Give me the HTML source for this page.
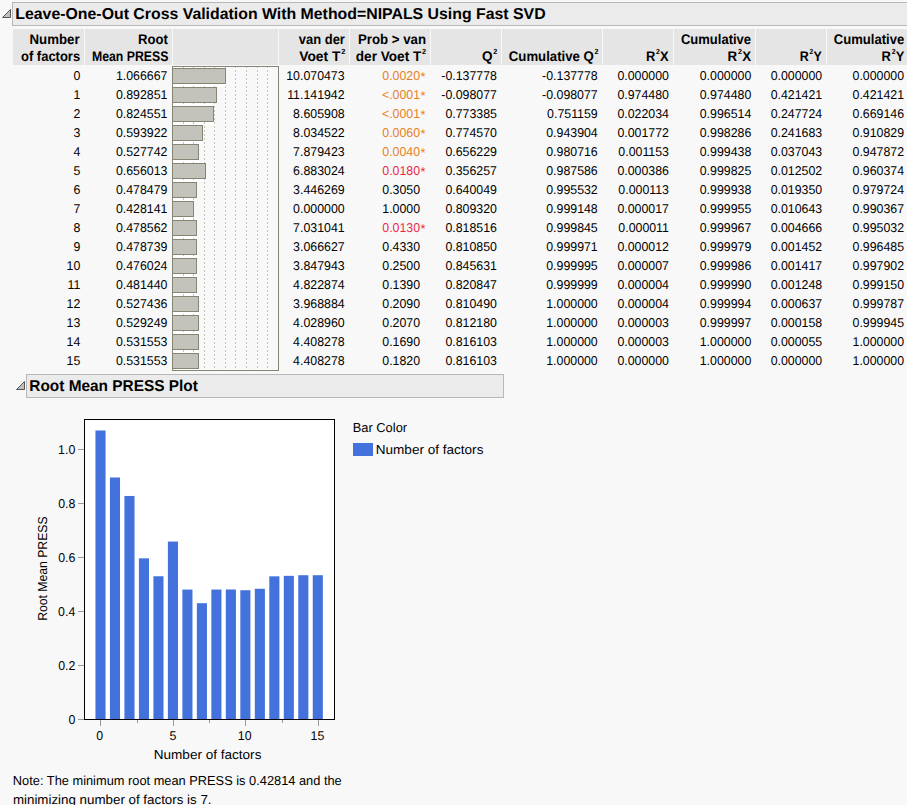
<!DOCTYPE html><html><head><meta charset="utf-8"><style>html,body{margin:0;padding:0}body{width:907px;height:805px;overflow:hidden;background:#f8f8f8;position:relative}svg{position:absolute;left:0;top:0}text{font-family:"Liberation Sans",sans-serif}</style></head><body>
<svg width="907" height="805" style="text-rendering:geometricPrecision">
<rect x="12.5" y="2.5" width="905" height="23" fill="#ebebeb" stroke="#b8b8b8"/>
<path d="M2.5 17.5 L10.5 17.5 L10.5 9.5 Z" fill="#c0c0c0" stroke="#555" stroke-width="1" stroke-linejoin="miter"/>
<rect x="26.5" y="374.5" width="477" height="23" fill="#ebebeb" stroke="#b8b8b8"/>
<path d="M16.5 389.5 L24.5 389.5 L24.5 381.5 Z" fill="#c0c0c0" stroke="#555" stroke-width="1" stroke-linejoin="miter"/>
<rect x="13" y="29" width="71" height="36" fill="#e5e5e5"/>
<rect x="85" y="29" width="87" height="36" fill="#e5e5e5"/>
<rect x="173" y="29" width="105" height="36" fill="#e5e5e5"/>
<rect x="279" y="29" width="70" height="36" fill="#e5e5e5"/>
<rect x="350" y="29" width="80" height="36" fill="#e5e5e5"/>
<rect x="431" y="29" width="70" height="36" fill="#e5e5e5"/>
<rect x="502" y="29" width="100" height="36" fill="#e5e5e5"/>
<rect x="603" y="29" width="70" height="36" fill="#e5e5e5"/>
<rect x="674" y="29" width="81" height="36" fill="#e5e5e5"/>
<rect x="756" y="29" width="70" height="36" fill="#e5e5e5"/>
<rect x="827" y="29" width="81" height="36" fill="#e5e5e5"/>
<g shape-rendering="crispEdges">
<rect x="172.5" y="66.5" width="106" height="304" fill="none" stroke="#858576"/>
<rect x="172" y="67" width="54" height="20" fill="#fff"/>
<rect x="172" y="86" width="45" height="20" fill="#fff"/>
<rect x="172" y="105" width="42" height="20" fill="#fff"/>
<rect x="172" y="124" width="31" height="20" fill="#fff"/>
<rect x="172" y="143" width="27" height="20" fill="#fff"/>
<rect x="172" y="162" width="34" height="20" fill="#fff"/>
<rect x="172" y="181" width="25" height="20" fill="#fff"/>
<rect x="172" y="200" width="22" height="20" fill="#fff"/>
<rect x="172" y="219" width="25" height="20" fill="#fff"/>
<rect x="172" y="238" width="25" height="20" fill="#fff"/>
<rect x="172" y="257" width="25" height="20" fill="#fff"/>
<rect x="172" y="276" width="25" height="20" fill="#fff"/>
<rect x="172" y="295" width="27" height="20" fill="#fff"/>
<rect x="172" y="314" width="27" height="20" fill="#fff"/>
<rect x="172" y="333" width="27" height="20" fill="#fff"/>
<rect x="172" y="352" width="27" height="18" fill="#fff"/>
<line x1="183.5" y1="67" x2="183.5" y2="370" stroke="#fff"/>
<line x1="183.5" y1="66" x2="183.5" y2="370" stroke="#c3c3bb" stroke-dasharray="2,2"/>
<line x1="193.5" y1="67" x2="193.5" y2="370" stroke="#fff"/>
<line x1="193.5" y1="66" x2="193.5" y2="370" stroke="#c3c3bb" stroke-dasharray="2,2"/>
<line x1="204.5" y1="67" x2="204.5" y2="370" stroke="#fff"/>
<line x1="204.5" y1="66" x2="204.5" y2="370" stroke="#c3c3bb" stroke-dasharray="2,2"/>
<line x1="214.5" y1="67" x2="214.5" y2="370" stroke="#fff"/>
<line x1="214.5" y1="66" x2="214.5" y2="370" stroke="#c3c3bb" stroke-dasharray="2,2"/>
<line x1="225.5" y1="67" x2="225.5" y2="370" stroke="#fff"/>
<line x1="225.5" y1="66" x2="225.5" y2="370" stroke="#c3c3bb" stroke-dasharray="2,2"/>
<line x1="235.5" y1="67" x2="235.5" y2="370" stroke="#fff"/>
<line x1="235.5" y1="66" x2="235.5" y2="370" stroke="#c3c3bb" stroke-dasharray="2,2"/>
<line x1="246.5" y1="67" x2="246.5" y2="370" stroke="#fff"/>
<line x1="246.5" y1="66" x2="246.5" y2="370" stroke="#c3c3bb" stroke-dasharray="2,2"/>
<line x1="257.5" y1="67" x2="257.5" y2="370" stroke="#fff"/>
<line x1="257.5" y1="66" x2="257.5" y2="370" stroke="#c3c3bb" stroke-dasharray="2,2"/>
<line x1="267.5" y1="67" x2="267.5" y2="370" stroke="#fff"/>
<line x1="267.5" y1="66" x2="267.5" y2="370" stroke="#c3c3bb" stroke-dasharray="2,2"/>
<rect x="172.5" y="68.5" width="53" height="15" fill="#c3c3bb" stroke="#858576"/>
<rect x="172.5" y="87.5" width="44" height="15" fill="#c3c3bb" stroke="#858576"/>
<rect x="172.5" y="106.5" width="41" height="15" fill="#c3c3bb" stroke="#858576"/>
<rect x="172.5" y="125.5" width="30" height="15" fill="#c3c3bb" stroke="#858576"/>
<rect x="172.5" y="144.5" width="26" height="15" fill="#c3c3bb" stroke="#858576"/>
<rect x="172.5" y="163.5" width="33" height="15" fill="#c3c3bb" stroke="#858576"/>
<rect x="172.5" y="182.5" width="24" height="15" fill="#c3c3bb" stroke="#858576"/>
<rect x="172.5" y="201.5" width="21" height="15" fill="#c3c3bb" stroke="#858576"/>
<rect x="172.5" y="220.5" width="24" height="15" fill="#c3c3bb" stroke="#858576"/>
<rect x="172.5" y="239.5" width="24" height="15" fill="#c3c3bb" stroke="#858576"/>
<rect x="172.5" y="258.5" width="24" height="15" fill="#c3c3bb" stroke="#858576"/>
<rect x="172.5" y="277.5" width="24" height="15" fill="#c3c3bb" stroke="#858576"/>
<rect x="172.5" y="296.5" width="26" height="15" fill="#c3c3bb" stroke="#858576"/>
<rect x="172.5" y="315.5" width="26" height="15" fill="#c3c3bb" stroke="#858576"/>
<rect x="172.5" y="334.5" width="26" height="15" fill="#c3c3bb" stroke="#858576"/>
<rect x="172.5" y="353.5" width="26" height="15" fill="#c3c3bb" stroke="#858576"/>
<rect x="172.5" y="66.5" width="106" height="304" fill="none" stroke="#858576"/>
</g>
<rect x="84" y="419" width="251" height="301" fill="#fff"/>
<rect x="95.45" y="430.47" width="10.10" height="289.03" fill="#4472dc"/>
<rect x="109.94" y="477.48" width="10.10" height="242.02" fill="#4472dc"/>
<rect x="124.42" y="495.96" width="10.10" height="223.54" fill="#4472dc"/>
<rect x="138.91" y="558.34" width="10.10" height="161.16" fill="#4472dc"/>
<rect x="153.40" y="576.25" width="10.10" height="143.25" fill="#4472dc"/>
<rect x="167.88" y="541.55" width="10.10" height="177.95" fill="#4472dc"/>
<rect x="182.37" y="589.57" width="10.10" height="129.93" fill="#4472dc"/>
<rect x="196.86" y="603.19" width="10.10" height="116.31" fill="#4472dc"/>
<rect x="211.35" y="589.55" width="10.10" height="129.95" fill="#4472dc"/>
<rect x="225.83" y="589.50" width="10.10" height="130.00" fill="#4472dc"/>
<rect x="240.32" y="590.24" width="10.10" height="129.26" fill="#4472dc"/>
<rect x="254.81" y="588.77" width="10.10" height="130.73" fill="#4472dc"/>
<rect x="269.29" y="576.33" width="10.10" height="143.17" fill="#4472dc"/>
<rect x="283.78" y="575.84" width="10.10" height="143.66" fill="#4472dc"/>
<rect x="298.27" y="575.21" width="10.10" height="144.29" fill="#4472dc"/>
<rect x="312.75" y="575.21" width="10.10" height="144.29" fill="#4472dc"/>
<g shape-rendering="crispEdges">
<rect x="84.5" y="419.5" width="250" height="300" fill="none" stroke="#000"/>
<line x1="78" y1="719.5" x2="84" y2="719.5" stroke="#999"/>
<line x1="78" y1="665.5" x2="84" y2="665.5" stroke="#999"/>
<line x1="78" y1="611.5" x2="84" y2="611.5" stroke="#999"/>
<line x1="78" y1="557.5" x2="84" y2="557.5" stroke="#999"/>
<line x1="78" y1="503.5" x2="84" y2="503.5" stroke="#999"/>
<line x1="78" y1="449.5" x2="84" y2="449.5" stroke="#999"/>
<line x1="100.5" y1="720" x2="100.5" y2="726" stroke="#999"/>
<line x1="173.5" y1="720" x2="173.5" y2="726" stroke="#999"/>
<line x1="245.5" y1="720" x2="245.5" y2="726" stroke="#999"/>
<line x1="318.5" y1="720" x2="318.5" y2="726" stroke="#999"/>
<line x1="137.5" y1="720" x2="137.5" y2="723" stroke="#999"/>
<line x1="209.5" y1="720" x2="209.5" y2="723" stroke="#999"/>
<line x1="282.5" y1="720" x2="282.5" y2="723" stroke="#999"/>
<rect x="353" y="443" width="20" height="13" fill="#4472dc"/>
</g>
<text transform="translate(15.28 19.00) scale(1.0037 1)" font-size="15.8" font-weight="bold" fill="#000">Leave-One-Out Cross Validation With Method=NIPALS Using Fast SVD</text>
<text transform="translate(29.31 391.00) scale(0.9747 1)" font-size="15.8" font-weight="bold" fill="#000">Root Mean PRESS Plot</text>
<text transform="translate(29.49 44.00) scale(0.9461 1)" font-size="14" font-weight="bold" fill="#000">Number</text>
<text transform="translate(20.94 61.00) scale(0.9284 1)" font-size="14" font-weight="bold" fill="#000">of factors</text>
<text transform="translate(138.00 44.00) scale(0.9354 1)" font-size="14" font-weight="bold" fill="#000">Root</text>
<text transform="translate(91.95 61.00) scale(0.8769 1)" font-size="14" font-weight="bold" fill="#000">Mean PRESS</text>
<text transform="translate(298.83 44.00) scale(0.9253 1)" font-size="14" font-weight="bold" fill="#000">van der</text>
<text transform="translate(299.21 61.00) scale(0.9857 1)" font-size="14" font-weight="bold" fill="#000">Voet T<tspan font-size="7.5" dy="-7" dx="0.8">2</tspan><tspan dy="7" dx="0.3"></tspan></text>
<text transform="translate(357.89 44.00) scale(0.9465 1)" font-size="14" font-weight="bold" fill="#000">Prob &gt; van</text>
<text transform="translate(355.79 61.00) scale(0.9711 1)" font-size="14" font-weight="bold" fill="#000">der Voet T<tspan font-size="7.5" dy="-7" dx="0.8">2</tspan><tspan dy="7" dx="0.3"></tspan></text>
<text transform="translate(482.00 61.00) scale(0.9635 1)" font-size="14" font-weight="bold" fill="#000">Q<tspan font-size="7.5" dy="-7" dx="0.8">2</tspan><tspan dy="7" dx="0.3"></tspan></text>
<text transform="translate(508.81 61.00) scale(0.9413 1)" font-size="14" font-weight="bold" fill="#000">Cumulative Q<tspan font-size="7.5" dy="-7" dx="0.8">2</tspan><tspan dy="7" dx="0.3"></tspan></text>
<text transform="translate(645.92 61.00) scale(0.9186 1)" font-size="14" font-weight="bold" fill="#000">R<tspan font-size="7.5" dy="-7" dx="0.8">2</tspan><tspan dy="7" dx="0.3">X</tspan></text>
<text transform="translate(680.92 44.00) scale(0.9298 1)" font-size="14" font-weight="bold" fill="#000">Cumulative</text>
<text transform="translate(727.59 61.00) scale(0.9482 1)" font-size="14" font-weight="bold" fill="#000">R<tspan font-size="7.5" dy="-7" dx="0.8">2</tspan><tspan dy="7" dx="0.3">X</tspan></text>
<text transform="translate(799.74 61.00) scale(0.8889 1)" font-size="14" font-weight="bold" fill="#000">R<tspan font-size="7.5" dy="-7" dx="0.8">2</tspan><tspan dy="7" dx="0.3">Y</tspan></text>
<text transform="translate(833.81 44.00) scale(0.9339 1)" font-size="14" font-weight="bold" fill="#000">Cumulative</text>
<text transform="translate(881.61 61.00) scale(0.9231 1)" font-size="14" font-weight="bold" fill="#000">R<tspan font-size="7.5" dy="-7" dx="0.8">2</tspan><tspan dy="7" dx="0.3">Y</tspan></text>
<text transform="translate(153.75 759.00) scale(1.0420 1)" font-size="13" font-weight="normal" fill="#000">Number of factors</text>
<text transform="translate(352.69 432.00) scale(0.9905 1)" font-size="13" font-weight="normal" fill="#000">Bar Color</text>
<text transform="translate(375.75 453.90) scale(1.0420 1)" font-size="13" font-weight="normal" fill="#000">Number of factors</text>
<text transform="translate(12.85 785.00) scale(0.9858 1)" font-size="13" font-weight="normal" fill="#000">Note: The minimum root mean PRESS is 0.42814 and the</text>
<text transform="translate(12.90 804.00) scale(1.0260 1)" font-size="13" font-weight="normal" fill="#000">minimizing number of factors is 7.</text>
<text transform="translate(80.28 80.00) scale(0.9654 1)" text-anchor="end" font-size="12.8" fill="#000">0</text>
<text transform="translate(167.44 80.00) scale(0.9654 1)" text-anchor="end" font-size="12.8" fill="#000">1.066667</text>
<text transform="translate(344.62 80.00) scale(0.9654 1)" text-anchor="end" font-size="12.8" fill="#000">10.070473</text>
<text transform="translate(420.10 80.00) scale(0.9654 1)" text-anchor="end" font-size="12.8" fill="#e8801e">0.0020</text>
<text x="420.56" y="80.50" font-size="12.8" fill="#e8801e">*</text>
<text transform="translate(496.94 80.00) scale(0.9654 1)" text-anchor="end" font-size="12.8" fill="#000">-0.137778</text>
<text transform="translate(597.74 80.00) scale(0.9654 1)" text-anchor="end" font-size="12.8" fill="#000">-0.137778</text>
<text transform="translate(668.96 80.00) scale(0.9654 1)" text-anchor="end" font-size="12.8" fill="#000">0.000000</text>
<text transform="translate(751.26 80.00) scale(0.9654 1)" text-anchor="end" font-size="12.8" fill="#000">0.000000</text>
<text transform="translate(822.16 80.00) scale(0.9654 1)" text-anchor="end" font-size="12.8" fill="#000">0.000000</text>
<text transform="translate(904.06 80.00) scale(0.9654 1)" text-anchor="end" font-size="12.8" fill="#000">0.000000</text>
<text transform="translate(80.28 99.00) scale(0.9654 1)" text-anchor="end" font-size="12.8" fill="#000">1</text>
<text transform="translate(167.44 99.00) scale(0.9654 1)" text-anchor="end" font-size="12.8" fill="#000">0.892851</text>
<text transform="translate(344.62 99.00) scale(0.9654 1)" text-anchor="end" font-size="12.8" fill="#000">11.141942</text>
<text transform="translate(420.10 99.00) scale(0.9654 1)" text-anchor="end" font-size="12.8" fill="#e8801e">&lt;.0001</text>
<text x="420.56" y="99.50" font-size="12.8" fill="#e8801e">*</text>
<text transform="translate(496.94 99.00) scale(0.9654 1)" text-anchor="end" font-size="12.8" fill="#000">-0.098077</text>
<text transform="translate(597.74 99.00) scale(0.9654 1)" text-anchor="end" font-size="12.8" fill="#000">-0.098077</text>
<text transform="translate(668.96 99.00) scale(0.9654 1)" text-anchor="end" font-size="12.8" fill="#000">0.974480</text>
<text transform="translate(751.26 99.00) scale(0.9654 1)" text-anchor="end" font-size="12.8" fill="#000">0.974480</text>
<text transform="translate(822.16 99.00) scale(0.9654 1)" text-anchor="end" font-size="12.8" fill="#000">0.421421</text>
<text transform="translate(904.06 99.00) scale(0.9654 1)" text-anchor="end" font-size="12.8" fill="#000">0.421421</text>
<text transform="translate(80.28 118.00) scale(0.9654 1)" text-anchor="end" font-size="12.8" fill="#000">2</text>
<text transform="translate(167.44 118.00) scale(0.9654 1)" text-anchor="end" font-size="12.8" fill="#000">0.824551</text>
<text transform="translate(344.62 118.00) scale(0.9654 1)" text-anchor="end" font-size="12.8" fill="#000">8.605908</text>
<text transform="translate(420.10 118.00) scale(0.9654 1)" text-anchor="end" font-size="12.8" fill="#e8801e">&lt;.0001</text>
<text x="420.56" y="118.50" font-size="12.8" fill="#e8801e">*</text>
<text transform="translate(496.94 118.00) scale(0.9654 1)" text-anchor="end" font-size="12.8" fill="#000">0.773385</text>
<text transform="translate(597.74 118.00) scale(0.9654 1)" text-anchor="end" font-size="12.8" fill="#000">0.751159</text>
<text transform="translate(668.96 118.00) scale(0.9654 1)" text-anchor="end" font-size="12.8" fill="#000">0.022034</text>
<text transform="translate(751.26 118.00) scale(0.9654 1)" text-anchor="end" font-size="12.8" fill="#000">0.996514</text>
<text transform="translate(822.16 118.00) scale(0.9654 1)" text-anchor="end" font-size="12.8" fill="#000">0.247724</text>
<text transform="translate(904.06 118.00) scale(0.9654 1)" text-anchor="end" font-size="12.8" fill="#000">0.669146</text>
<text transform="translate(80.28 137.00) scale(0.9654 1)" text-anchor="end" font-size="12.8" fill="#000">3</text>
<text transform="translate(167.44 137.00) scale(0.9654 1)" text-anchor="end" font-size="12.8" fill="#000">0.593922</text>
<text transform="translate(344.62 137.00) scale(0.9654 1)" text-anchor="end" font-size="12.8" fill="#000">8.034522</text>
<text transform="translate(420.10 137.00) scale(0.9654 1)" text-anchor="end" font-size="12.8" fill="#e8801e">0.0060</text>
<text x="420.56" y="137.50" font-size="12.8" fill="#e8801e">*</text>
<text transform="translate(496.94 137.00) scale(0.9654 1)" text-anchor="end" font-size="12.8" fill="#000">0.774570</text>
<text transform="translate(597.74 137.00) scale(0.9654 1)" text-anchor="end" font-size="12.8" fill="#000">0.943904</text>
<text transform="translate(668.96 137.00) scale(0.9654 1)" text-anchor="end" font-size="12.8" fill="#000">0.001772</text>
<text transform="translate(751.26 137.00) scale(0.9654 1)" text-anchor="end" font-size="12.8" fill="#000">0.998286</text>
<text transform="translate(822.16 137.00) scale(0.9654 1)" text-anchor="end" font-size="12.8" fill="#000">0.241683</text>
<text transform="translate(904.06 137.00) scale(0.9654 1)" text-anchor="end" font-size="12.8" fill="#000">0.910829</text>
<text transform="translate(80.28 156.00) scale(0.9654 1)" text-anchor="end" font-size="12.8" fill="#000">4</text>
<text transform="translate(167.44 156.00) scale(0.9654 1)" text-anchor="end" font-size="12.8" fill="#000">0.527742</text>
<text transform="translate(344.62 156.00) scale(0.9654 1)" text-anchor="end" font-size="12.8" fill="#000">7.879423</text>
<text transform="translate(420.10 156.00) scale(0.9654 1)" text-anchor="end" font-size="12.8" fill="#e8801e">0.0040</text>
<text x="420.56" y="156.50" font-size="12.8" fill="#e8801e">*</text>
<text transform="translate(496.94 156.00) scale(0.9654 1)" text-anchor="end" font-size="12.8" fill="#000">0.656229</text>
<text transform="translate(597.74 156.00) scale(0.9654 1)" text-anchor="end" font-size="12.8" fill="#000">0.980716</text>
<text transform="translate(668.96 156.00) scale(0.9654 1)" text-anchor="end" font-size="12.8" fill="#000">0.001153</text>
<text transform="translate(751.26 156.00) scale(0.9654 1)" text-anchor="end" font-size="12.8" fill="#000">0.999438</text>
<text transform="translate(822.16 156.00) scale(0.9654 1)" text-anchor="end" font-size="12.8" fill="#000">0.037043</text>
<text transform="translate(904.06 156.00) scale(0.9654 1)" text-anchor="end" font-size="12.8" fill="#000">0.947872</text>
<text transform="translate(80.28 175.00) scale(0.9654 1)" text-anchor="end" font-size="12.8" fill="#000">5</text>
<text transform="translate(167.44 175.00) scale(0.9654 1)" text-anchor="end" font-size="12.8" fill="#000">0.656013</text>
<text transform="translate(344.62 175.00) scale(0.9654 1)" text-anchor="end" font-size="12.8" fill="#000">6.883024</text>
<text transform="translate(420.10 175.00) scale(0.9654 1)" text-anchor="end" font-size="12.8" fill="#eb2a46">0.0180</text>
<text x="420.56" y="175.50" font-size="12.8" fill="#eb2a46">*</text>
<text transform="translate(496.94 175.00) scale(0.9654 1)" text-anchor="end" font-size="12.8" fill="#000">0.356257</text>
<text transform="translate(597.74 175.00) scale(0.9654 1)" text-anchor="end" font-size="12.8" fill="#000">0.987586</text>
<text transform="translate(668.96 175.00) scale(0.9654 1)" text-anchor="end" font-size="12.8" fill="#000">0.000386</text>
<text transform="translate(751.26 175.00) scale(0.9654 1)" text-anchor="end" font-size="12.8" fill="#000">0.999825</text>
<text transform="translate(822.16 175.00) scale(0.9654 1)" text-anchor="end" font-size="12.8" fill="#000">0.012502</text>
<text transform="translate(904.06 175.00) scale(0.9654 1)" text-anchor="end" font-size="12.8" fill="#000">0.960374</text>
<text transform="translate(80.28 194.00) scale(0.9654 1)" text-anchor="end" font-size="12.8" fill="#000">6</text>
<text transform="translate(167.44 194.00) scale(0.9654 1)" text-anchor="end" font-size="12.8" fill="#000">0.478479</text>
<text transform="translate(344.62 194.00) scale(0.9654 1)" text-anchor="end" font-size="12.8" fill="#000">3.446269</text>
<text transform="translate(420.10 194.00) scale(0.9654 1)" text-anchor="end" font-size="12.8" fill="#000">0.3050</text>
<text transform="translate(496.94 194.00) scale(0.9654 1)" text-anchor="end" font-size="12.8" fill="#000">0.640049</text>
<text transform="translate(597.74 194.00) scale(0.9654 1)" text-anchor="end" font-size="12.8" fill="#000">0.995532</text>
<text transform="translate(668.96 194.00) scale(0.9654 1)" text-anchor="end" font-size="12.8" fill="#000">0.000113</text>
<text transform="translate(751.26 194.00) scale(0.9654 1)" text-anchor="end" font-size="12.8" fill="#000">0.999938</text>
<text transform="translate(822.16 194.00) scale(0.9654 1)" text-anchor="end" font-size="12.8" fill="#000">0.019350</text>
<text transform="translate(904.06 194.00) scale(0.9654 1)" text-anchor="end" font-size="12.8" fill="#000">0.979724</text>
<text transform="translate(80.28 213.00) scale(0.9654 1)" text-anchor="end" font-size="12.8" fill="#000">7</text>
<text transform="translate(167.44 213.00) scale(0.9654 1)" text-anchor="end" font-size="12.8" fill="#000">0.428141</text>
<text transform="translate(344.62 213.00) scale(0.9654 1)" text-anchor="end" font-size="12.8" fill="#000">0.000000</text>
<text transform="translate(420.10 213.00) scale(0.9654 1)" text-anchor="end" font-size="12.8" fill="#000">1.0000</text>
<text transform="translate(496.94 213.00) scale(0.9654 1)" text-anchor="end" font-size="12.8" fill="#000">0.809320</text>
<text transform="translate(597.74 213.00) scale(0.9654 1)" text-anchor="end" font-size="12.8" fill="#000">0.999148</text>
<text transform="translate(668.96 213.00) scale(0.9654 1)" text-anchor="end" font-size="12.8" fill="#000">0.000017</text>
<text transform="translate(751.26 213.00) scale(0.9654 1)" text-anchor="end" font-size="12.8" fill="#000">0.999955</text>
<text transform="translate(822.16 213.00) scale(0.9654 1)" text-anchor="end" font-size="12.8" fill="#000">0.010643</text>
<text transform="translate(904.06 213.00) scale(0.9654 1)" text-anchor="end" font-size="12.8" fill="#000">0.990367</text>
<text transform="translate(80.28 232.00) scale(0.9654 1)" text-anchor="end" font-size="12.8" fill="#000">8</text>
<text transform="translate(167.44 232.00) scale(0.9654 1)" text-anchor="end" font-size="12.8" fill="#000">0.478562</text>
<text transform="translate(344.62 232.00) scale(0.9654 1)" text-anchor="end" font-size="12.8" fill="#000">7.031041</text>
<text transform="translate(420.10 232.00) scale(0.9654 1)" text-anchor="end" font-size="12.8" fill="#eb2a46">0.0130</text>
<text x="420.56" y="232.50" font-size="12.8" fill="#eb2a46">*</text>
<text transform="translate(496.94 232.00) scale(0.9654 1)" text-anchor="end" font-size="12.8" fill="#000">0.818516</text>
<text transform="translate(597.74 232.00) scale(0.9654 1)" text-anchor="end" font-size="12.8" fill="#000">0.999845</text>
<text transform="translate(668.96 232.00) scale(0.9654 1)" text-anchor="end" font-size="12.8" fill="#000">0.000011</text>
<text transform="translate(751.26 232.00) scale(0.9654 1)" text-anchor="end" font-size="12.8" fill="#000">0.999967</text>
<text transform="translate(822.16 232.00) scale(0.9654 1)" text-anchor="end" font-size="12.8" fill="#000">0.004666</text>
<text transform="translate(904.06 232.00) scale(0.9654 1)" text-anchor="end" font-size="12.8" fill="#000">0.995032</text>
<text transform="translate(80.28 251.00) scale(0.9654 1)" text-anchor="end" font-size="12.8" fill="#000">9</text>
<text transform="translate(167.44 251.00) scale(0.9654 1)" text-anchor="end" font-size="12.8" fill="#000">0.478739</text>
<text transform="translate(344.62 251.00) scale(0.9654 1)" text-anchor="end" font-size="12.8" fill="#000">3.066627</text>
<text transform="translate(420.10 251.00) scale(0.9654 1)" text-anchor="end" font-size="12.8" fill="#000">0.4330</text>
<text transform="translate(496.94 251.00) scale(0.9654 1)" text-anchor="end" font-size="12.8" fill="#000">0.810850</text>
<text transform="translate(597.74 251.00) scale(0.9654 1)" text-anchor="end" font-size="12.8" fill="#000">0.999971</text>
<text transform="translate(668.96 251.00) scale(0.9654 1)" text-anchor="end" font-size="12.8" fill="#000">0.000012</text>
<text transform="translate(751.26 251.00) scale(0.9654 1)" text-anchor="end" font-size="12.8" fill="#000">0.999979</text>
<text transform="translate(822.16 251.00) scale(0.9654 1)" text-anchor="end" font-size="12.8" fill="#000">0.001452</text>
<text transform="translate(904.06 251.00) scale(0.9654 1)" text-anchor="end" font-size="12.8" fill="#000">0.996485</text>
<text transform="translate(80.28 270.00) scale(0.9654 1)" text-anchor="end" font-size="12.8" fill="#000">10</text>
<text transform="translate(167.44 270.00) scale(0.9654 1)" text-anchor="end" font-size="12.8" fill="#000">0.476024</text>
<text transform="translate(344.62 270.00) scale(0.9654 1)" text-anchor="end" font-size="12.8" fill="#000">3.847943</text>
<text transform="translate(420.10 270.00) scale(0.9654 1)" text-anchor="end" font-size="12.8" fill="#000">0.2500</text>
<text transform="translate(496.94 270.00) scale(0.9654 1)" text-anchor="end" font-size="12.8" fill="#000">0.845631</text>
<text transform="translate(597.74 270.00) scale(0.9654 1)" text-anchor="end" font-size="12.8" fill="#000">0.999995</text>
<text transform="translate(668.96 270.00) scale(0.9654 1)" text-anchor="end" font-size="12.8" fill="#000">0.000007</text>
<text transform="translate(751.26 270.00) scale(0.9654 1)" text-anchor="end" font-size="12.8" fill="#000">0.999986</text>
<text transform="translate(822.16 270.00) scale(0.9654 1)" text-anchor="end" font-size="12.8" fill="#000">0.001417</text>
<text transform="translate(904.06 270.00) scale(0.9654 1)" text-anchor="end" font-size="12.8" fill="#000">0.997902</text>
<text transform="translate(80.28 289.00) scale(0.9654 1)" text-anchor="end" font-size="12.8" fill="#000">11</text>
<text transform="translate(167.44 289.00) scale(0.9654 1)" text-anchor="end" font-size="12.8" fill="#000">0.481440</text>
<text transform="translate(344.62 289.00) scale(0.9654 1)" text-anchor="end" font-size="12.8" fill="#000">4.822874</text>
<text transform="translate(420.10 289.00) scale(0.9654 1)" text-anchor="end" font-size="12.8" fill="#000">0.1390</text>
<text transform="translate(496.94 289.00) scale(0.9654 1)" text-anchor="end" font-size="12.8" fill="#000">0.820847</text>
<text transform="translate(597.74 289.00) scale(0.9654 1)" text-anchor="end" font-size="12.8" fill="#000">0.999999</text>
<text transform="translate(668.96 289.00) scale(0.9654 1)" text-anchor="end" font-size="12.8" fill="#000">0.000004</text>
<text transform="translate(751.26 289.00) scale(0.9654 1)" text-anchor="end" font-size="12.8" fill="#000">0.999990</text>
<text transform="translate(822.16 289.00) scale(0.9654 1)" text-anchor="end" font-size="12.8" fill="#000">0.001248</text>
<text transform="translate(904.06 289.00) scale(0.9654 1)" text-anchor="end" font-size="12.8" fill="#000">0.999150</text>
<text transform="translate(80.28 308.00) scale(0.9654 1)" text-anchor="end" font-size="12.8" fill="#000">12</text>
<text transform="translate(167.44 308.00) scale(0.9654 1)" text-anchor="end" font-size="12.8" fill="#000">0.527436</text>
<text transform="translate(344.62 308.00) scale(0.9654 1)" text-anchor="end" font-size="12.8" fill="#000">3.968884</text>
<text transform="translate(420.10 308.00) scale(0.9654 1)" text-anchor="end" font-size="12.8" fill="#000">0.2090</text>
<text transform="translate(496.94 308.00) scale(0.9654 1)" text-anchor="end" font-size="12.8" fill="#000">0.810490</text>
<text transform="translate(597.74 308.00) scale(0.9654 1)" text-anchor="end" font-size="12.8" fill="#000">1.000000</text>
<text transform="translate(668.96 308.00) scale(0.9654 1)" text-anchor="end" font-size="12.8" fill="#000">0.000004</text>
<text transform="translate(751.26 308.00) scale(0.9654 1)" text-anchor="end" font-size="12.8" fill="#000">0.999994</text>
<text transform="translate(822.16 308.00) scale(0.9654 1)" text-anchor="end" font-size="12.8" fill="#000">0.000637</text>
<text transform="translate(904.06 308.00) scale(0.9654 1)" text-anchor="end" font-size="12.8" fill="#000">0.999787</text>
<text transform="translate(80.28 327.00) scale(0.9654 1)" text-anchor="end" font-size="12.8" fill="#000">13</text>
<text transform="translate(167.44 327.00) scale(0.9654 1)" text-anchor="end" font-size="12.8" fill="#000">0.529249</text>
<text transform="translate(344.62 327.00) scale(0.9654 1)" text-anchor="end" font-size="12.8" fill="#000">4.028960</text>
<text transform="translate(420.10 327.00) scale(0.9654 1)" text-anchor="end" font-size="12.8" fill="#000">0.2070</text>
<text transform="translate(496.94 327.00) scale(0.9654 1)" text-anchor="end" font-size="12.8" fill="#000">0.812180</text>
<text transform="translate(597.74 327.00) scale(0.9654 1)" text-anchor="end" font-size="12.8" fill="#000">1.000000</text>
<text transform="translate(668.96 327.00) scale(0.9654 1)" text-anchor="end" font-size="12.8" fill="#000">0.000003</text>
<text transform="translate(751.26 327.00) scale(0.9654 1)" text-anchor="end" font-size="12.8" fill="#000">0.999997</text>
<text transform="translate(822.16 327.00) scale(0.9654 1)" text-anchor="end" font-size="12.8" fill="#000">0.000158</text>
<text transform="translate(904.06 327.00) scale(0.9654 1)" text-anchor="end" font-size="12.8" fill="#000">0.999945</text>
<text transform="translate(80.28 346.00) scale(0.9654 1)" text-anchor="end" font-size="12.8" fill="#000">14</text>
<text transform="translate(167.44 346.00) scale(0.9654 1)" text-anchor="end" font-size="12.8" fill="#000">0.531553</text>
<text transform="translate(344.62 346.00) scale(0.9654 1)" text-anchor="end" font-size="12.8" fill="#000">4.408278</text>
<text transform="translate(420.10 346.00) scale(0.9654 1)" text-anchor="end" font-size="12.8" fill="#000">0.1690</text>
<text transform="translate(496.94 346.00) scale(0.9654 1)" text-anchor="end" font-size="12.8" fill="#000">0.816103</text>
<text transform="translate(597.74 346.00) scale(0.9654 1)" text-anchor="end" font-size="12.8" fill="#000">1.000000</text>
<text transform="translate(668.96 346.00) scale(0.9654 1)" text-anchor="end" font-size="12.8" fill="#000">0.000003</text>
<text transform="translate(751.26 346.00) scale(0.9654 1)" text-anchor="end" font-size="12.8" fill="#000">1.000000</text>
<text transform="translate(822.16 346.00) scale(0.9654 1)" text-anchor="end" font-size="12.8" fill="#000">0.000055</text>
<text transform="translate(904.06 346.00) scale(0.9654 1)" text-anchor="end" font-size="12.8" fill="#000">1.000000</text>
<text transform="translate(80.28 365.00) scale(0.9654 1)" text-anchor="end" font-size="12.8" fill="#000">15</text>
<text transform="translate(167.44 365.00) scale(0.9654 1)" text-anchor="end" font-size="12.8" fill="#000">0.531553</text>
<text transform="translate(344.62 365.00) scale(0.9654 1)" text-anchor="end" font-size="12.8" fill="#000">4.408278</text>
<text transform="translate(420.10 365.00) scale(0.9654 1)" text-anchor="end" font-size="12.8" fill="#000">0.1820</text>
<text transform="translate(496.94 365.00) scale(0.9654 1)" text-anchor="end" font-size="12.8" fill="#000">0.816103</text>
<text transform="translate(597.74 365.00) scale(0.9654 1)" text-anchor="end" font-size="12.8" fill="#000">1.000000</text>
<text transform="translate(668.96 365.00) scale(0.9654 1)" text-anchor="end" font-size="12.8" fill="#000">0.000000</text>
<text transform="translate(751.26 365.00) scale(0.9654 1)" text-anchor="end" font-size="12.8" fill="#000">1.000000</text>
<text transform="translate(822.16 365.00) scale(0.9654 1)" text-anchor="end" font-size="12.8" fill="#000">0.000000</text>
<text transform="translate(904.06 365.00) scale(0.9654 1)" text-anchor="end" font-size="12.8" fill="#000">1.000000</text>
<text transform="translate(75.38 724.00) scale(0.9654 1)" text-anchor="end" font-size="12.8" fill="#000">0</text>
<text transform="translate(75.35 670.00) scale(0.9654 1)" text-anchor="end" font-size="12.8" fill="#000">0.2</text>
<text transform="translate(75.26 616.00) scale(0.9654 1)" text-anchor="end" font-size="12.8" fill="#000">0.4</text>
<text transform="translate(75.33 562.00) scale(0.9654 1)" text-anchor="end" font-size="12.8" fill="#000">0.6</text>
<text transform="translate(75.32 508.00) scale(0.9654 1)" text-anchor="end" font-size="12.8" fill="#000">0.8</text>
<text transform="translate(75.27 454.00) scale(0.9654 1)" text-anchor="end" font-size="12.8" fill="#000">1.0</text>
<text transform="translate(96.22 740.00) scale(0.9654 1)" font-size="12.8" fill="#000">0</text>
<text transform="translate(169.38 740.00) scale(0.9654 1)" font-size="12.8" fill="#000">5</text>
<text transform="translate(237.80 740.00) scale(0.9654 1)" font-size="12.8" fill="#000">10</text>
<text transform="translate(310.61 740.00) scale(0.9654 1)" font-size="12.8" fill="#000">15</text>
<text transform="translate(47.00 620.00) rotate(-90) scale(0.9381 1) translate(-0.91 0)" font-size="13" fill="#000">Root Mean PRESS</text>
</svg>
</body></html>
